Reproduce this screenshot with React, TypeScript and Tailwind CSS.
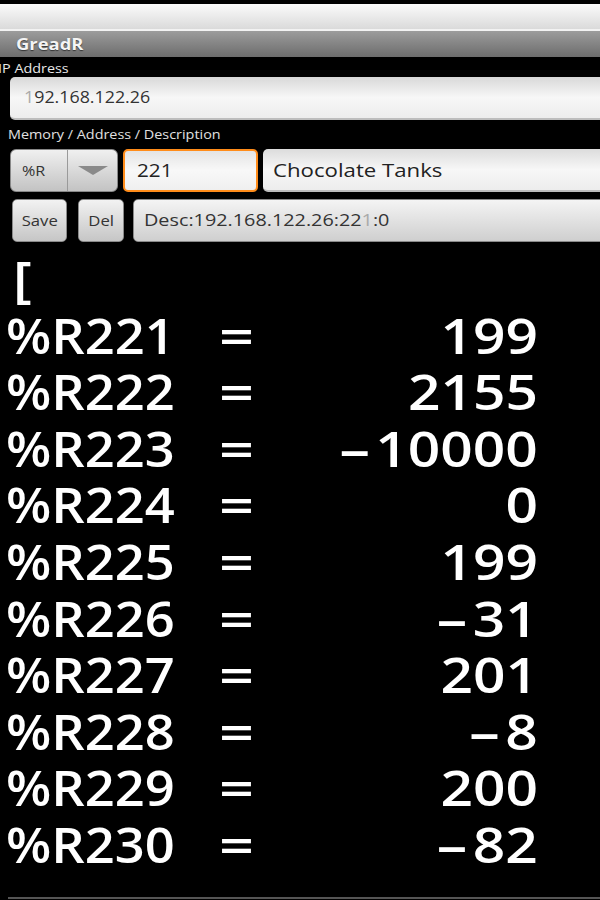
import React from "react";

const rows: [string, string][] = [
  ["%R221", "199"],
  ["%R222", "2155"],
  ["%R223", "-10000"],
  ["%R224", "0"],
  ["%R225", "199"],
  ["%R226", "-31"],
  ["%R227", "201"],
  ["%R228", "-8"],
  ["%R229", "200"],
  ["%R230", "-82"],
];

const font = "font-['Open_Sans','DejaVu_Sans',sans-serif]";

function Value({ v }: { v: string }) {
  if (v.startsWith("-")) {
    return (
      <span className="inline-block origin-right scale-x-[1.16]">
        <span className="inline-block scale-x-[1.8] ml-[12px] mr-[10px]">-</span>
        {v.slice(1)}
      </span>
    );
  }
  return <span className="inline-block origin-right scale-x-[1.16]">{v}</span>;
}

export default function App() {
  return (
    <div className={`w-[600px] h-[900px] bg-black overflow-hidden ${font}`}>
      <div className="h-[4px]" />
      <div className="h-[25px] bg-linear-to-b from-[#fbfbfb] to-[#dadada]" />
      <div className="h-[2px] bg-[#f2f2f2]" />
      <div className="h-[26px] bg-linear-to-b from-[#9c9c9c] to-[#6d6d6d] flex items-center pl-[16px]">
        <span className="inline-block origin-left scale-x-[1.15] text-[16px] font-bold text-[#f4f4f4] [text-shadow:0_1px_1px_#333]">
          GreadR
        </span>
      </div>
      <div className="h-[19px] flex items-end -ml-[2px]">
        <span className="inline-block origin-left scale-x-[1.15] text-[12.5px] leading-[14px] text-[#e8e8e8]">IP Address</span>
      </div>
      <div className="mt-[1px] ml-[10px] -mr-[10px] h-[43px] rounded-[5px] bg-linear-to-b from-[#d8d8d8] via-[#f7f7f7] to-[#ededed] border-b-2 border-[#bdbdbd] flex items-center pl-[14px]">
        <span className="inline-block origin-left scale-x-[1.15] text-[15.5px] text-[#333]">
          <span className="text-[#aaa]">1</span>92.168.122.26
        </span>
      </div>
      <div className="h-[22px] flex items-end pl-[8px]">
        <span className="inline-block origin-left scale-x-[1.15] text-[12.5px] leading-[14px] text-[#e0e0e0]">
          Memory / Address / Description
        </span>
      </div>
      <div className="mt-[7px] flex h-[43px] gap-[5px]">
        <div className="ml-[10px] w-[108px] h-full rounded-[6px] bg-linear-to-b from-[#f0f0f0] to-[#c3c3c3] border border-[#888] flex">
          <div className="w-[57px] flex items-center pl-[11px] border-r border-[#9a9a9a]">
            <span className="inline-block origin-left scale-x-[1.15] text-[14px] text-[#333]">%R</span>
          </div>
          <div className="flex-1 flex items-center justify-center">
            <svg width="30" height="9" viewBox="0 0 30 9">
              <polygon points="0,0 30,0 15,9" fill="#8a8a8a" />
            </svg>
          </div>
        </div>
        <div className="w-[135px] h-full rounded-[5px] border-2 border-[#ff8c1a] bg-linear-to-b from-[#e4e4e4] via-[#f8f8f8] to-[#efefef] flex items-center pl-[12px]">
          <span className="inline-block origin-left scale-x-[1.15] text-[18px] text-[#222]">221</span>
        </div>
        <div className="flex-1 -mr-[10px] h-full rounded-[5px] bg-linear-to-b from-[#dcdcdc] via-[#f7f7f7] to-[#ededed] border-b-2 border-[#bdbdbd] flex items-center pl-[10px]">
          <span className="inline-block origin-left scale-x-[1.2] text-[18.5px] text-[#222]">Chocolate Tanks</span>
        </div>
      </div>
      <div className="mt-[7px] flex h-[43px]">
        <div className="ml-[12px] w-[55px] h-full rounded-[5px] bg-linear-to-b from-[#f2f2f2] to-[#c6c6c6] border border-[#8a8a8a] flex items-center justify-center">
          <span className="inline-block scale-x-[1.15] text-[14.5px] text-[#333]">Save</span>
        </div>
        <div className="ml-[11px] w-[46px] h-full rounded-[5px] bg-linear-to-b from-[#f2f2f2] to-[#c6c6c6] border border-[#8a8a8a] flex items-center justify-center">
          <span className="inline-block scale-x-[1.15] text-[14.5px] text-[#333]">Del</span>
        </div>
        <div className="ml-[9px] flex-1 -mr-[10px] h-full rounded-[5px] bg-linear-to-b from-[#f4f4f4] to-[#cfcfcf] border border-[#8a8a8a] flex items-center pl-[10px]">
          <span className="inline-block origin-left scale-x-[1.2] text-[16.5px] text-[#333]">
            Desc:192.168.122.26:22<span className="text-[#aaa]">1</span>:0
          </span>
        </div>
      </div>
      <div className="mt-[8px] text-[49px] leading-[56.6px] font-semibold text-white">
        <div className="pl-[13px]">
          <span className="inline-block origin-left scale-x-[1.16]">[</span>
        </div>
        {rows.map(([k, v]) => (
          <div key={k} className="grid grid-cols-[219px_auto_1fr] w-[538px]">
            <span className="pl-[6px]">
              <span className="inline-block origin-left scale-x-[1.07]">{k}</span>
            </span>
            <span className="inline-block origin-left scale-x-[1.25]">=</span>
            <span className="text-right">
              <Value v={v} />
            </span>
          </div>
        ))}
      </div>
      <div className="mt-[24px] ml-[8px] h-[2px] bg-[#555]" />
    </div>
  );
}
